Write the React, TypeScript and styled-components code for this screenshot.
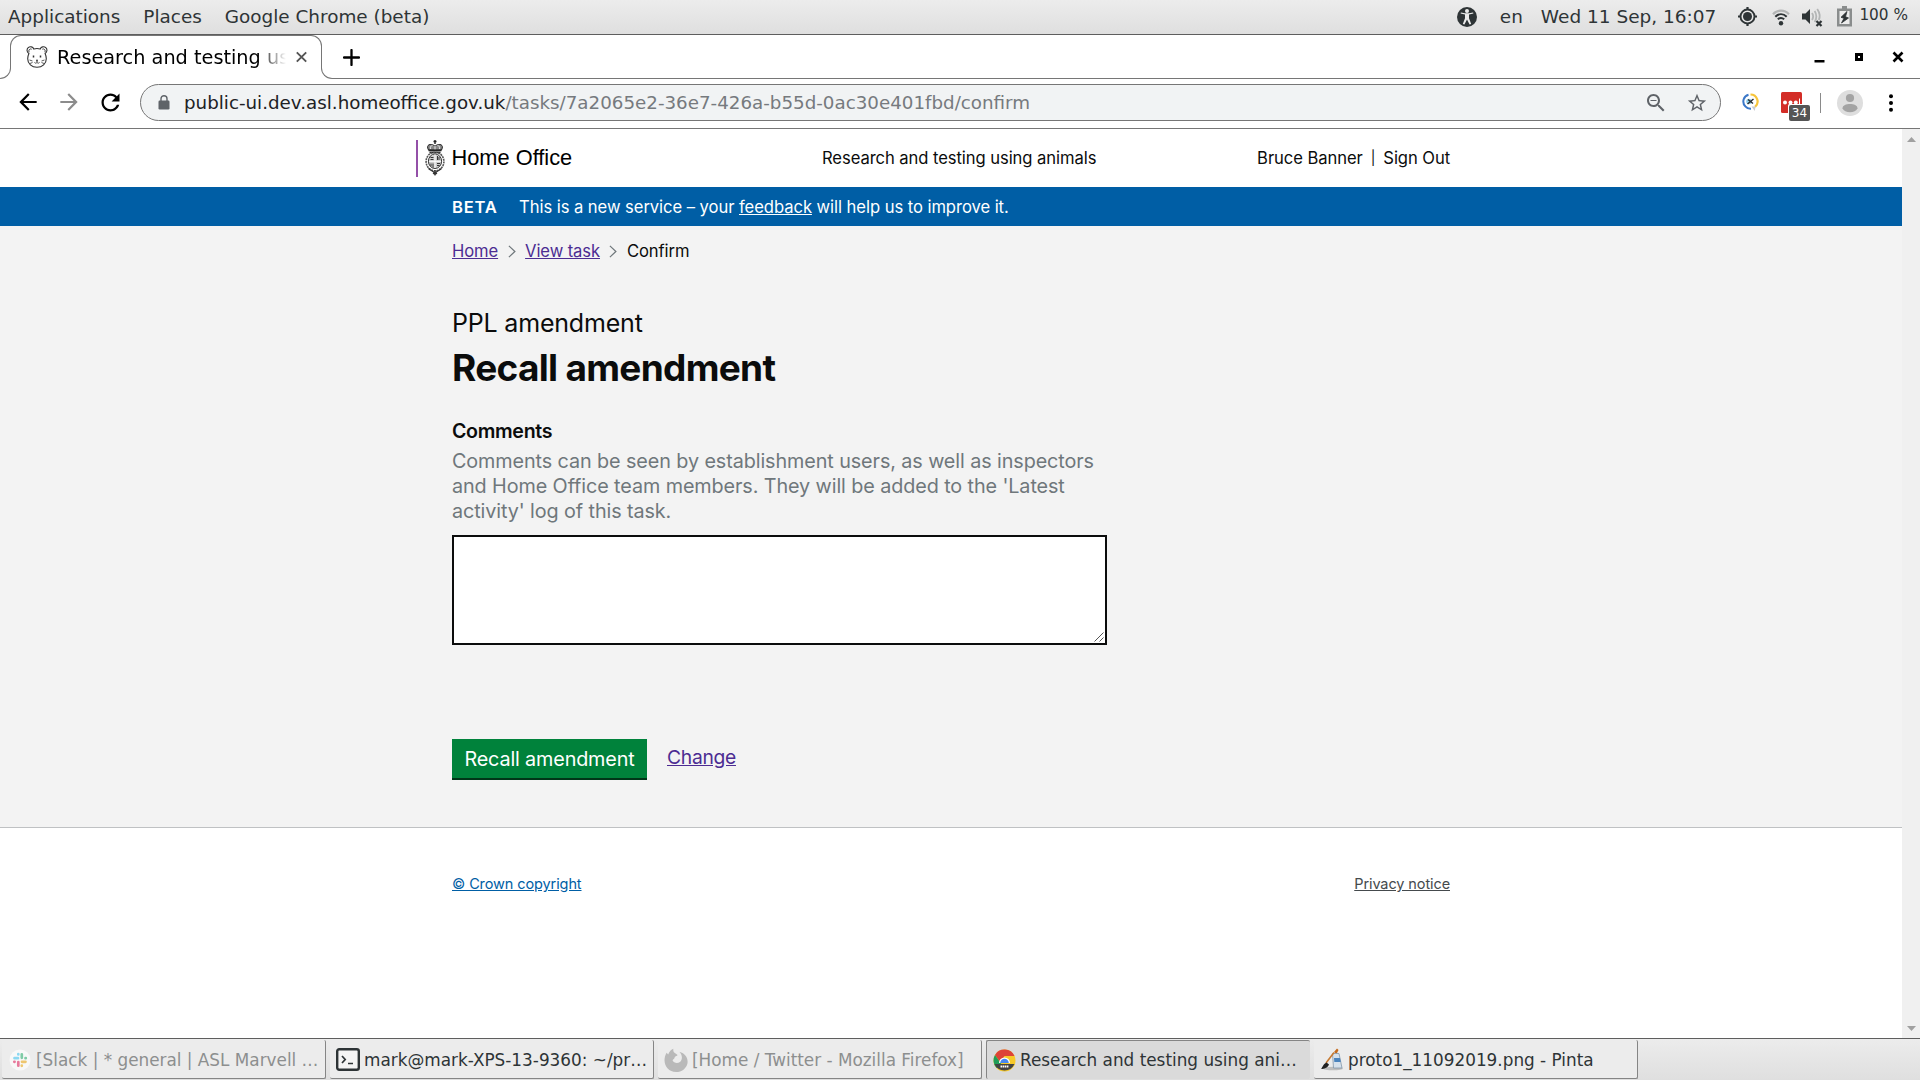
import React from 'react';
import styled, { createGlobalStyle } from 'styled-components';

const GlobalStyle = createGlobalStyle`
  *, *::before, *::after { box-sizing: border-box; }
  html, body { margin: 0; padding: 0; background: #fff; overflow: hidden; }
  svg { display: block; flex: none; }
`;

const desktopFont = `"DejaVu Sans", sans-serif`;
const pageFont = `Inter, "Liberation Sans", sans-serif`;

const Desktop = styled.div`
  width: 1920px;
  height: 1080px;
  display: flex;
  flex-direction: column;
  font-family: ${desktopFont};
  overflow: hidden;
`;

/* ---------- Desktop panel ---------- */

const Panel = styled.header`
  height: 35px;
  flex: none;
  display: flex;
  justify-content: space-between;
  align-items: center;
  padding: 0 12px 1px 8px;
  background: linear-gradient(#ececec, #dfdfdf);
  border-bottom: 1px solid #5e5e5e;
  color: #2e3436;
  white-space: pre;
`;

const PanelGroup = styled.div<{ $gap?: number }>`
  display: flex;
  align-items: center;
  gap: ${p => p.$gap ?? 0}px;
`;

const PanelLabel = styled.span<{ $ml?: number; $size?: number; $lift?: number }>`
  margin-left: ${p => p.$ml ?? 0}px;
  font-size: ${p => p.$size ?? 18.4}px;
  padding-bottom: ${p => p.$lift ?? 0}px;
  line-height: 24px;
`;

const Slot = styled.span<{ $w: number; $ml?: number }>`
  display: flex;
  flex: none;
  justify-content: center;
  align-items: center;
  width: ${p => p.$w}px;
  margin-left: ${p => p.$ml ?? 0}px;
`;

/* ---------- Browser chrome ---------- */

const TabStrip = styled.div`
  height: 44px;
  flex: none;
  display: flex;
  background: #fff;
`;

const FlareLeft = styled.div`
  width: 11px;
  height: 12px;
  margin-right: -1px;
  align-self: flex-end;
  border: solid #767676;
  border-width: 0 1px 1px 0;
  border-bottom-right-radius: 11px;
`;

const FlareRight = styled.div`
  flex: 1;
  height: 12px;
  margin-left: -1px;
  align-self: flex-end;
  border: solid #767676;
  border-width: 0 0 1px 1px;
  border-bottom-left-radius: 11px;
`;

const Tab = styled.div`
  width: 312px;
  height: 33px;
  display: flex;
  align-items: flex-start;
  padding: 10px 13px 0 15px;
  border: solid #767676;
  border-width: 1px 1px 0 1px;
  border-radius: 11px 11px 0 0;
`;

const TabTitle = styled.div`
  width: 229px;
  flex: none;
  margin: 0 10px 0 9px;
  overflow: hidden;
  white-space: nowrap;
  font-size: 19.3px;
  line-height: 24px;
  color: #000;
  mask-image: linear-gradient(90deg, #000 200px, transparent 229px);
`;

const StripControls = styled.div`
  height: 44px;
  margin-right: -1598px;
  width: 1598px;
  z-index: 1;
  display: flex;
  justify-content: space-between;
  align-items: center;
  padding: 0 16px 0 21px;
`;

const WindowButtons = styled.div`
  display: flex;
  align-items: center;
  gap: 27px;
`;

const Toolbar = styled.div`
  height: 50px;
  flex: none;
  display: flex;
  align-items: center;
  padding: 0 0 2px 15px;
  background: #fff;
  border-bottom: 1px solid #767676;
`;

const NavButtons = styled.div`
  display: flex;
  gap: 15px;
  width: 125px;
`;

const Omnibox = styled.div`
  width: 1581px;
  height: 37px;
  display: flex;
  align-items: center;
  padding: 0 12px 0 17px;
  border: 1px solid #767676;
  border-radius: 19px;
  background: #f1f3f4;
`;

const Url = styled.div`
  flex: 1;
  margin-left: 14px;
  font-size: 18.27px;
  line-height: 24px;
  color: #202124;
  white-space: nowrap;
  span { color: #767a7e; }
`;

const ExtensionBox = styled.div`
  position: relative;
  width: 21px;
  height: 21px;
  margin-left: 22px;
`;

const ExtensionBadge = styled.span`
  position: absolute;
  left: 8px;
  top: 13px;
  width: 21px;
  height: 16px;
  border-radius: 2px;
  background: #555;
  color: #fff;
  font-size: 12px;
  line-height: 16px;
  text-align: center;
`;

const Divider = styled.i`
  width: 1px;
  height: 20px;
  margin-left: 18px;
  background: #8a8a8a;
`;

/* ---------- Web page ---------- */

const Viewport = styled.div`
  height: 909px;
  flex: none;
  display: flex;
`;

const Page = styled.div`
  width: 1902px;
  display: flex;
  flex-direction: column;
  font-family: ${pageFont};
  color: #0b0c0c;
  background: #fff;
`;

const Scrollbar = styled.div`
  width: 18px;
  display: flex;
  flex-direction: column;
  justify-content: space-between;
  align-items: center;
  padding: 8px 0 7px;
  background: #f0f0f0;
`;

const Column = styled.div`
  width: 998px;
  margin: 0 auto;
`;

const SiteHeader = styled(Column)`
  height: 58px;
  flex: none;
  display: flex;
  align-items: center;
  font-size: 16.6px;
  letter-spacing: -0.07px;
  line-height: 24px;
  white-space: pre;
`;

const Logo = styled.div`
  display: flex;
  align-items: center;
  width: 406px;
  margin-left: -36px;
  padding-left: 7px;
  height: 37px;
  border-left: 2px solid #9450a8;
`;

const LogoName = styled.span`
  margin-left: 6.5px;
  font-family: "Liberation Sans", sans-serif;
  font-size: 21.8px;
  letter-spacing: 0;
  color: #000;
`;

const UserNav = styled.nav`
  margin-left: auto;
  display: flex;
  gap: 8px;
`;

const Pipe = styled.span`
  font-size: 14px;
`;

const PhaseBar = styled.div`
  height: 39px;
  flex: none;
  background: #005ea5;
  color: #fff;
`;

const PhaseRow = styled(Column)`
  display: flex;
  align-items: center;
  height: 39px;
  padding-top: 1px;
  font-size: 16.6px;
  letter-spacing: -0.055px;
`;

const PhaseTag = styled.strong`
  width: 67px;
  font-weight: 600;
  letter-spacing: 0.75px;
`;

const PhaseLink = styled.a`
  color: #fff;
  text-decoration: underline;
`;

const Main = styled.main`
  flex: none;
  height: 602px;
  background: #f3f3f3;
  border-bottom: 1px solid #bfc1c3;
`;

const Content = styled(Column)`
  display: flex;
  flex-direction: column;
  align-items: flex-start;
  padding-top: 13px;
`;

const Breadcrumbs = styled.nav`
  display: flex;
  align-items: center;
  height: 24px;
  font-size: 16.6px;
  letter-spacing: -0.1px;
  line-height: 24px;
`;

const Link = styled.a`
  color: #4c2c92;
  text-decoration: underline;
`;

const Caption = styled.div`
  margin-top: 45px;
  font-size: 25px;
  letter-spacing: -0.19px;
  line-height: 30px;
`;

const Heading = styled.h1`
  margin: 7px 0 0;
  font-size: 37px;
  letter-spacing: -0.69px;
  line-height: 46px;
  font-weight: 700;
`;

const Label = styled.label`
  margin-top: 28px;
  font-size: 19.6px;
  letter-spacing: -0.32px;
  line-height: 25px;
  font-weight: 600;
`;

const Hint = styled.p`
  margin: 5px 0 0;
  font-size: 19.8px;
  letter-spacing: -0.095px;
  line-height: 25px;
  color: #6f777b;
  white-space: pre;
`;

const CommentField = styled.div`
  position: relative;
  width: 655px;
  height: 110px;
  margin-top: 11px;
`;

const CommentBox = styled.textarea`
  display: block;
  width: 655px;
  height: 110px;
  margin: 0;
  border: 2px solid #0b0c0c;
  border-radius: 0;
  background: #fff;
  resize: none;
  outline: none;
`;

const Grip = styled.svg`
  position: absolute;
  right: 3px;
  bottom: 3px;
`;

const Actions = styled.div`
  display: flex;
  align-items: flex-start;
  gap: 20px;
  margin-top: 94px;
  font-size: 19.8px;
`;

const SubmitButton = styled.button`
  width: 195px;
  height: 41px;
  padding: 1px 0 0;
  border: 0;
  border-bottom: 2px solid #003618;
  background: #00823b;
  color: #fff;
  font: inherit;
  letter-spacing: -0.15px;
  white-space: nowrap;
`;

const ActionLink = styled(Link)`
  font-size: 19.3px;
  letter-spacing: -0.3px;
  line-height: 37px;
`;

const Footer = styled(Column)`
  display: flex;
  justify-content: space-between;
  padding-top: 44px;
  font-size: 14.5px;
  letter-spacing: -0.1px;
  line-height: 24px;
`;

const FooterLink = styled.a<{ $tone: string }>`
  color: ${p => p.$tone};
  text-decoration: underline;
`;

/* ---------- Taskbar ---------- */

const Taskbar = styled.footer`
  height: 42px;
  flex: none;
  display: flex;
  gap: 4px;
  padding: 1px 0 0 2px;
  border-top: 1px solid #5e5e5e;
  background: linear-gradient(#ececec, #dfdfdf);
`;

const TaskButton = styled.div<{ $active?: boolean; $dim?: boolean }>`
  width: 324px;
  height: 39px;
  display: flex;
  align-items: center;
  padding: ${p => (p.$active ? '0 0 0 6px' : '1px 0 0 6px')};
  border: solid #858585;
  border-width: ${p => (p.$active ? '1px 0 0 1px' : '0 1px 1px 0')};
  border-radius: 2px;
  background: ${p => (p.$active ? '#dadada' : '#ececec')};
  color: ${p => (p.$dim ? '#8d8f8f' : '#2e3436')};
  font-size: 16.85px;
  white-space: nowrap;
`;

const TaskLabel = styled.span`
  margin-left: 4px;
`;

/* ---------- Icons ---------- */

type GlyphProps = { d: string; size: number; color: string; flip?: boolean };

const Glyph = ({ d, size, color, flip }: GlyphProps) => (
  <svg width={size} height={size} viewBox="0 0 24 24" fill={color}>
    <path d={d} transform={flip ? 'matrix(-1 0 0 1 24 0)' : undefined} />
  </svg>
);

const ARROW = 'M20 11H7.83l5.59-5.59L12 4l-8 8 8 8 1.41-1.41L7.83 13H20v-2z';
const RELOAD =
  'M17.65 6.35C16.2 4.9 14.21 4 12 4c-4.42 0-7.99 3.58-7.99 8s3.57 8 7.99 8c3.73 0 6.84-2.55 7.73-6h-2.08c-.82 2.33-3.04 4-5.65 4-3.31 0-6-2.69-6-6s2.69-6 6-6c1.66 0 3.14.69 4.22 1.78L13 11h7V4l-2.35 2.35z';
const STAR =
  'M22 9.24l-7.19-.62L12 2 9.19 8.63 2 9.24l5.46 4.73L5.82 21 12 17.27 18.18 21l-1.63-7.03L22 9.24zM12 15.4l-3.76 2.27 1-4.28-3.32-2.88 4.38-.38L12 6.1l1.71 4.04 4.38.38-3.32 2.88 1 4.28L12 15.4z';
const ZOOM_OUT =
  'M15.5 14h-.79l-.28-.27C15.41 12.59 16 11.11 16 9.5 16 5.91 13.09 3 9.5 3S3 5.91 3 9.5 5.91 16 9.5 16c1.61 0 3.09-.59 4.23-1.57l.27.28v.79l5 4.99L20.49 19l-4.99-5zm-6 0C7.01 14 5 11.99 5 9.5S7.01 5 9.5 5 14 7.01 14 9.5 11.99 14 9.5 14zM6.5 8.9h6v1.2h-6z';

const AccessibilityIcon = () => (
  <svg width="20" height="20" viewBox="0 0 20 20">
    <circle cx="10" cy="10" r="10" fill="#2e3436" />
    <circle cx="10" cy="4.1" r="2" fill="#ececec" />
    <path
      d="M3.6 6.6 8 7.6v3.6L5.8 17l1.6.6L10 12.4l2.6 5.2 1.6-.6L12 11.200V7.600l4.400-1-.3-1.200-4.100.8H8l-4.100-.8z"
      fill="#ececec"
    />
  </svg>
);

const TargetIcon = () => (
  <svg width="19" height="19" viewBox="0 0 19 19">
    <circle cx="9.500" cy="9.500" r="4.500" fill="#2e3436" />
    <circle cx="9.500" cy="9.500" r="7" fill="none" stroke="#2e3436" strokeWidth="1.900" />
    <path d="M9.500 0v3M9.500 16v3M0 9.500h3M16 9.500h3" stroke="#2e3436" strokeWidth="2.200" />
  </svg>
);

const WifiIcon = () => (
  <svg width="18" height="18" viewBox="0 0 18 18" fill="none">
    <path d="M1 6.200C5.500 1.400 12.500 1.400 17 6.200" stroke="#b3b5b5" strokeWidth="2.200" />
    <path d="M3.300 8.700c3.400-3.300 8-3.300 11.400 0" stroke="#2e3436" strokeWidth="2.100" />
    <path d="M5.800 11.300c2-1.700 4.400-1.700 6.400 0" stroke="#2e3436" strokeWidth="2" />
    <circle cx="9" cy="15.300" r="2.200" fill="#2e3436" />
  </svg>
);

const VolumeIcon = () => (
  <svg width="21" height="20" viewBox="0 0 21 20" fill="none">
    <path d="M0 6.500h3.500L8 2v15l-4.500-4.500H0z" fill="#2e3436" />
    <path d="M10 6c1.300 2 1.300 5 0 7M12.600 4c2.300 3.300 2.300 8 0 11M15.200 2c2.700 4 3 8 1.600 11" stroke="#b3b5b5" strokeWidth="1.800" />
    <path d="m14.500 14 5 5m0-5-5 5" stroke="#2e3436" strokeWidth="2.200" />
  </svg>
);

const BatteryIcon = () => (
  <svg width="15" height="21" viewBox="0 0 15 21" fill="none">
    <path d="M5 0h5v2.500h5V20.500H0V2.500h5z" fill="#8a8d8d" />
    <path d="M2.500 5h10v13h-10z" fill="#ececec" />
    <path d="M10 5.500 4 11.300l3 1-2.500 4.700L11.500 12l-3-1.300z" fill="#2e3436" stroke="#2e3436" strokeWidth=".8" />
  </svg>
);

const MouseIcon = () => (
  <svg width="22" height="22" viewBox="0 0 22 22" fill="none" stroke="#333" strokeWidth="1.100">
    <path d="M2.900 7.400A3.500 3.500 0 1 1 7.800 3a9.500 9.500 0 0 1 6.400 0 3.500 3.500 0 1 1 4.900 4.400c.9 2 1.200 3.600 1.200 5.300 0 5-4 8.600-9.300 8.600s-9.300-3.600-9.300-8.600c0-1.700.3-3.300 1.200-5.300z" />
    <path d="M3.200 6.200a2 2 0 0 1 2.500-3M18.800 6.200a2 2 0 0 0-2.500-3" strokeWidth=".9" />
    <path d="M7.500 9.500v2M14.500 9.500v2" strokeWidth="1.500" />
    <path d="M11 15v1.500m-2.500-.2c.7 1.300 2 1.200 2.500.2.500 1 1.800 1.100 2.500-.2M3.500 14l3 1M4 17.500l2.500-1M18.500 14l-3 1M18 17.500l-2.500-1" strokeWidth=".8" />
    <circle cx="11" cy="14.500" r=".9" fill="#333" stroke="none" />
  </svg>
);

const LockIcon = () => (
  <svg width="12" height="15" viewBox="0 0 12 15" fill="none">
    <rect x=".5" y="5.500" width="11" height="9" rx="1.200" fill="#5f6368" />
    <path d="M3 6V3.700a3 3 0 0 1 6 0V6" stroke="#5f6368" strokeWidth="1.400" />
  </svg>
);

const RingIcon = () => (
  <svg width="17" height="19" viewBox="0 0 17 19" fill="none">
    <path d="M6.500 1.700A7 7 0 0 0 3.300 13.300 7 7 0 0 0 9 15.700" stroke="#3b78c9" strokeWidth="2" />
    <path d="M8.500 1.500a7 7 0 0 1 4.500 12.400" stroke="#f7c53b" strokeWidth="2.200" />
    <path d="M9.500 13.500h4L12.800 18z" fill="#c9cbd0" />
    <circle cx="7" cy="8.500" r="2.800" fill="#8fd0ef" />
    <path d="m5.500 11 6-5M6 6.500l5 4" stroke="#2a2f33" strokeWidth="1.500" />
  </svg>
);

const RedDotsIcon = () => (
  <svg width="21" height="21" viewBox="0 0 21 21">
    <rect width="21" height="21" rx="1.500" fill="#d32d27" />
    <circle cx="4" cy="10.500" r="2" fill="#fff" />
    <circle cx="9.500" cy="10.500" r="2" fill="#fff" />
    <circle cx="14.800" cy="10.500" r="2" fill="#fff" />
    <path d="M18.500 6.500v7" stroke="#fff" strokeWidth="1" />
    <path d="M7 21v-7.500Q7 12 8.500 12H21v9z" fill="#fff" />
  </svg>
);

const AvatarIcon = () => (
  <svg width="26" height="26" viewBox="0 0 26 26">
    <circle cx="13" cy="13" r="13" fill="#dedede" />
    <circle cx="13" cy="8" r="4.100" fill="#a3a3a3" />
    <path d="M5.500 18.300c0-5.600 15-5.600 15 0-1.800 5.200-13.200 5.200-15 0z" fill="#a3a3a3" />
  </svg>
);

const DotsIcon = () => (
  <svg width="4" height="18" viewBox="0 0 4 18">
    <circle cx="2" cy="2.200" r="2" />
    <circle cx="2" cy="9" r="2" />
    <circle cx="2" cy="15.800" r="2" />
  </svg>
);

const CrestIcon = () => (
  <svg width="20" height="36" viewBox="0 0 20 36" fill="none" stroke="#222" strokeWidth="1">
    <path d="M10 0v4M8.500 1.500h3" strokeWidth="1.400" />
    <path d="M3.500 10C.5 4.500 5.500 3 10 6 14.500 3 19.500 4.500 16.500 10z" fill="#888" />
    <path d="M5.500 9c-.5-2 .5-3.500 2-3.500M14.500 9c.5-2-.5-3.500-2-3.500M10 5.500v4" stroke="#fff" strokeWidth=".8" />
    <path d="M3.500 10.500h13M4.500 12.500h11" strokeWidth="1.300" />
    <ellipse cx="10" cy="21.500" rx="8.900" ry="9.300" strokeWidth="1.600" stroke="#555" strokeDasharray="2 .7" />
    <ellipse cx="10" cy="21.200" rx="6.600" ry="7.300" fill="#ccc" stroke="#333" />
    <path d="M10 14.500v13.500M4 21.300h12" stroke="#fff" strokeWidth="1" />
    <path d="M5.500 17.500h3M5.500 19.500h3M12.500 16v4M14 17v3M6 23.500v2.500M8 23.500v4M12 23.500h3M12 25.500h2.500" stroke="#222" strokeWidth=".9" />
    <path d="M3.500 28.500c2 2 4.500 2.500 6.500 4.500 2-2 4.500-2.500 6.500-4.500M10 30v5.500M8 33l2 1.500 2-1.500" stroke="#333" strokeWidth="1.200" />
  </svg>
);

const Chevron = () => (
  <svg width="8" height="13" viewBox="0 0 8 13" fill="none" stroke="#6f777b" strokeWidth="1.200">
    <path d="m.9.900 6 5.600-6 5.600" />
  </svg>
);

const SlackIcon = () => (
  <svg width="24" height="24" viewBox="-1 -1 24 24" strokeWidth="2.700" strokeLinecap="round">
    <circle cx="11" cy="11" r="10.500" fill="#f8f8f8" />
    <path d="M5.500 9.200h3.500M9.300 5.200v.3" stroke="#8bd8f2" />
    <path d="M12.800 5.300v3.500M16.500 9.200h.3" stroke="#7fcba6" />
    <path d="M13 12.800h3.500M12.800 16.500v.3" stroke="#eec66f" />
    <path d="M9.300 13v3.700M5.300 12.800h.3" stroke="#e77b9c" />
  </svg>
);

const TerminalIcon = () => (
  <svg width="24" height="23" viewBox="0 0 24 23" fill="none">
    <rect x="1.200" y="1.200" width="21.600" height="20.600" rx="2" fill="#f4f4f4" stroke="#2e3436" strokeWidth="2.400" />
    <path d="m6 8 3.200 3.500L6 15M12 15.500h5" stroke="#2e3436" strokeWidth="1.700" />
  </svg>
);

const FirefoxIcon = () => (
  <svg width="24" height="24" viewBox="0 0 23 23">
    <path
      d="M2.500 4.500 4 6.200C5 3.500 7 1.500 9 .8 8.500 3 9.500 4.500 11.500 5.500l1.500 1.300c-.5 1-2 1.200-2.800 2 .3 1.500-1.400 1.700-2 3 1 2.700 4.800 3.500 7 1.700 3-2.500 2.300-7.500-.5-10 6 1.500 8.500 6.500 7.800 11C21.500 19.500 17 23 11.500 23 5 23 .5 18 .5 11.800c0-2.800.7-5.300 2-7.300z"
      fill="#b9b9b9"
    />
  </svg>
);

const ChromeBetaIcon = () => (
  <svg width="23" height="23" viewBox="0 0 23 23">
    <circle cx="11.500" cy="11.500" r="11" fill="#f7c928" />
    <path d="M2 6A11 11 0 0 1 21.500 7H11.500L7 13z" fill="#dd4337" />
    <path d="M2 6a11 11 0 0 0 1.500 13L9 16z" fill="#1f9d58" />
    <path d="M1.500 15h20a11 11 0 0 1-20 0z" fill="#434343" />
    <path d="M6 14a5.500 5.500 0 1 1 11 0z" fill="#fff" />
    <path d="M7.200 14a4.300 4.300 0 1 1 8.600 0z" fill="#4688f1" />
    <path d="M7.500 17.500h8" stroke="#fff" strokeWidth="2" strokeDasharray="1.600 .5" />
  </svg>
);

const PintaIcon = () => (
  <svg width="24" height="23" viewBox="0 0 24 23" fill="none">
    <ellipse cx="13" cy="20.500" rx="10" ry="1.800" fill="#bdbdbd" />
    <path d="m14 4 3-3.500 1.500 1.500-2 4z" fill="#c46a1c" />
    <path d="M12.500 5.500h6.500l3 14.500h-8.500z" fill="#d6e1ec" stroke="#8295a8" strokeWidth=".8" />
    <path d="M14 10h6l.8 4h-6.500z" fill="#4a83bd" />
    <path d="m6 15 8-10.500" stroke="#c77a32" strokeWidth="1.600" />
    <path d="M1 21c1-.5 2-5 5.500-6.500L9 16.500C7.500 20 4 21 1 21z" fill="#222" />
  </svg>
);

const Crumbs = () => (
  <Breadcrumbs>
    <Link>Home</Link>
    <Slot $w={27}><Chevron /></Slot>
    <Link>View task</Link>
    <Slot $w={27}><Chevron /></Slot>
    <span>Confirm</span>
  </Breadcrumbs>
);

const tasks = [
  { label: '[Slack | * general | ASL Marvell …', icon: <SlackIcon />, dim: true },
  { label: 'mark@mark-XPS-13-9360: ~/pr…', icon: <TerminalIcon /> },
  { label: '[Home / Twitter - Mozilla Firefox]', icon: <FirefoxIcon />, dim: true },
  { label: 'Research and testing using ani…', icon: <ChromeBetaIcon />, active: true },
  { label: 'proto1_11092019.png - Pinta', icon: <PintaIcon /> },
];

const HINT = `Comments can be seen by establishment users, as well as inspectors
and Home Office team members. They will be added to the 'Latest
activity' log of this task.`;

export default function App() {
  return (
    <Desktop>
      <GlobalStyle />
      <Panel>
        <PanelGroup $gap={23}>
          <PanelLabel>Applications</PanelLabel>
          <PanelLabel>Places</PanelLabel>
          <PanelLabel>Google Chrome (beta)</PanelLabel>
        </PanelGroup>
        <PanelGroup>
          <AccessibilityIcon />
          <PanelLabel $ml={23}>en</PanelLabel>
          <PanelLabel $ml={18} $size={18.5}>Wed 11 Sep, 16:07</PanelLabel>
          <Slot $w={19} $ml={22}><TargetIcon /></Slot>
          <Slot $w={18} $ml={15}><WifiIcon /></Slot>
          <Slot $w={21} $ml={12}><VolumeIcon /></Slot>
          <Slot $w={15} $ml={14}><BatteryIcon /></Slot>
          <PanelLabel $ml={7} $size={15.3} $lift={4}>100 %</PanelLabel>
        </PanelGroup>
      </Panel>

      <TabStrip>
        <FlareLeft />
        <Tab>
          <MouseIcon />
          <TabTitle>Research and testing using animals</TabTitle>
          <svg width="11" height="22" viewBox="0 0 11 22">
            <path d="m.8 6.300 9.400 9.400m0-9.400L.8 15.700" stroke="#555" strokeWidth="1.900" />
          </svg>
        </Tab>
        <StripControls>
          <svg width="17" height="17" viewBox="0 0 17 17">
            <path d="M8.500 1v15M1 8.500h15" stroke="#000" strokeWidth="2.300" strokeLinecap="round" />
          </svg>
          <WindowButtons>
            <svg width="13" height="12" viewBox="0 0 13 12"><path d="M1.500 9h10v2.500h-10z" /></svg>
            <svg width="12" height="12" viewBox="0 0 12 12"><path d="M3.500 3.500h5v5h-5z" fill="none" stroke="#000" strokeWidth="3" /></svg>
            <svg width="12" height="12" viewBox="0 0 12 12"><path d="m1.500 1.500 9 9m0-9-9 9" stroke="#000" strokeWidth="2.600" /></svg>
          </WindowButtons>
        </StripControls>
        <FlareRight />
      </TabStrip>

      <Toolbar>
        <NavButtons>
          <Glyph d={ARROW} size={26} color="#000" />
          <Glyph d={ARROW} size={26} color="#8c8c8c" flip />
          <Glyph d={RELOAD} size={27} color="#000" />
        </NavButtons>
        <Omnibox>
          <LockIcon />
          <Url>
            public-ui.dev.asl.homeoffice.gov.uk
            <span>/tasks/7a2065e2-36e7-426a-b55d-0ac30e401fbd/confirm</span>
          </Url>
          <Glyph d={ZOOM_OUT} size={24} color="#5f6368" />
          <Slot $w={22} $ml={18}><Glyph d={STAR} size={22} color="#5f6368" /></Slot>
        </Omnibox>
        <Slot $w={17} $ml={21}><RingIcon /></Slot>
        <ExtensionBox>
          <RedDotsIcon />
          <ExtensionBadge>34</ExtensionBadge>
        </ExtensionBox>
        <Divider />
        <Slot $w={26} $ml={16}><AvatarIcon /></Slot>
        <Slot $w={4} $ml={26}><DotsIcon /></Slot>
      </Toolbar>

      <Viewport>
        <Page>
          <SiteHeader>
            <Logo>
              <CrestIcon />
              <LogoName>Home Office</LogoName>
            </Logo>
            <span>Research and testing using animals</span>
            <UserNav>
              <span>Bruce Banner</span>
              <Pipe>|</Pipe>
              <span>Sign Out</span>
            </UserNav>
          </SiteHeader>
          <PhaseBar>
            <PhaseRow>
              <PhaseTag>BETA</PhaseTag>
              <span>
                This is a new service – your <PhaseLink>feedback</PhaseLink> will help us to improve it.
              </span>
            </PhaseRow>
          </PhaseBar>
          <Main>
            <Content>
              <Crumbs />
              <Caption>PPL amendment</Caption>
              <Heading>Recall amendment</Heading>
              <Label htmlFor="comments">Comments</Label>
              <Hint>{HINT}</Hint>
              <CommentField>
                <CommentBox id="comments" />
                <Grip width="10" height="10" viewBox="0 0 10 10">
                  <path d="M.5 9.500l9-9M5.500 9.500l4-4" stroke="#555" strokeWidth="1" />
                </Grip>
              </CommentField>
              <Actions>
                <SubmitButton>Recall amendment</SubmitButton>
                <ActionLink>Change</ActionLink>
              </Actions>
            </Content>
          </Main>
          <Footer>
            <FooterLink $tone="#005ea5">© Crown copyright</FooterLink>
            <FooterLink $tone="#454a4d">Privacy notice</FooterLink>
          </Footer>
        </Page>
        <Scrollbar>
          <svg width="9" height="5" viewBox="0 0 9 5"><path d="M4.500 0 9 5H0z" fill="#a0a0a0" /></svg>
          <svg width="9" height="5" viewBox="0 0 9 5"><path d="M0 0h9L4.500 5z" fill="#a0a0a0" /></svg>
        </Scrollbar>
      </Viewport>

      <Taskbar>
        {tasks.map(t => (
          <TaskButton key={t.label} $active={t.active} $dim={t.dim}>
            {t.icon}
            <TaskLabel>{t.label}</TaskLabel>
          </TaskButton>
        ))}
      </Taskbar>
    </Desktop>
  );
}
